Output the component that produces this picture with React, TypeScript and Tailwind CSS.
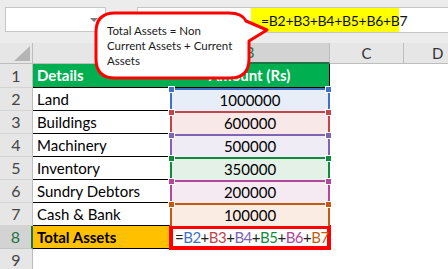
import React from "react";

type Item = {
  label: string;
  amount: string;
  line: string;
  fill: string;
};

const items: Item[] = [
  {label: "Land", amount: "1000000", line: "#3f72c6", fill: "#e8eef8"},
  {label: "Buildings", amount: "600000", line: "#c2454a", fill: "#f8e8e8"},
  {label: "Machinery", amount: "500000", line: "#8064b4", fill: "#efecf6"},
  {label: "Inventory", amount: "350000", line: "#128a3e", fill: "#e4f1e6"},
  {label: "Sundry Debtors", amount: "200000", line: "#b2489a", fill: "#f6eaf2"},
  {label: "Cash & Bank", amount: "100000", line: "#c25a12", fill: "#faece2"},
];

const formula: [string, string][] = [
  ["=", "#222"],
  ["B2", "#3f72c6"],
  ["+", "#222"],
  ["B3", "#c2454a"],
  ["+", "#222"],
  ["B4", "#8064b4"],
  ["+", "#222"],
  ["B5", "#128a3e"],
  ["+", "#222"],
  ["B6", "#b2489a"],
  ["+", "#222"],
  ["B7", "#c25a12"],
];

const RowHead = ({n, active}: {n: number; active?: boolean}) => (
  <div
    className={`flex items-center justify-center border-b text-[16px] text-[#444] ${
      active
        ? "bg-[#d3d3d3] border-b-[#c4c4c4] border-r-2 border-r-[#217346] text-[#217346]"
        : "bg-[#e6e6e6] border-b-[#d4d4d4] border-r border-r-[#bdbdbd]"
    }`}
  >
    {n}
  </div>
);

const Handle = ({color, side}: {color: string; side: "left" | "right"}) => (
  <span
    className={`absolute -top-[4px] h-[7px] w-[7px] border border-white ${
      side === "left" ? "-left-[4px]" : "-right-[4px]"
    }`}
    style={{backgroundColor: color}}
  />
);

export default function App() {
  return (
    <div className="relative h-[269px] w-[448px] overflow-hidden bg-white font-['Lato',sans-serif] text-black">
      {/* name box + formula bar */}
      <div className="flex h-[43px] items-start bg-[#ececec] pl-[5px] pt-[7px]">
        <div className="relative h-[25px] w-[101px] border border-[#c6c6c6] bg-white">
          <span className="absolute right-[7px] top-[10px] h-0 w-0 border-x-[4px] border-t-[4px] border-x-transparent border-t-[#7a7a7a]" />
        </div>
        <div className="ml-[31px] flex h-[26px] flex-1 border border-r-0 border-[#c6c6c6] bg-white">
          <div className="ml-[113px] flex h-[24px] w-[148px] items-center bg-[#ffff00] pl-[10px] text-[14px] tracking-[-0.3px] text-[#111]">
            =B2+B3+B4+B5+B6+B7
          </div>
        </div>
      </div>

      {/* sheet */}
      <div className="grid grid-cols-[33px_137px_160px_74px_1fr] grid-rows-[21px_24px_repeat(8,23px)]">
        {/* column headers */}
        <div className="relative border-b border-r border-[#bdbdbd] bg-[#e6e6e6]">
          <span className="absolute bottom-[2px] right-[2px] h-0 w-0 border-b-[15px] border-l-[16px] border-b-[#b5b5b5] border-l-transparent" />
        </div>
        <div className="flex items-center justify-center border-b border-r border-[#bdbdbd] bg-[#e6e6e6] text-[15px] text-[#333]">
          A
        </div>
        <div className="flex items-center justify-center border-b-2 border-r border-b-[#217346] border-r-[#bdbdbd] bg-[#d3d3d3] text-[15px] text-[#217346]">
          B
        </div>
        <div className="flex items-center justify-center border-b border-r border-[#bdbdbd] bg-[#e6e6e6] text-[15px] text-[#333]">
          C
        </div>
        <div className="flex items-center justify-start border-b border-[#bdbdbd] bg-[#e6e6e6] pl-[28px] text-[15px] text-[#333]">
          D
        </div>

        {/* row 1 */}
        <RowHead n={1} />
        <div className="flex items-center border-b border-black bg-[#00b050] pl-[4px] text-[15px] font-bold text-white">
          Details
        </div>
        <div className="flex items-center justify-center border-b border-r border-black bg-[#00b050] text-[15px] font-bold text-white">
          Amount (Rs)
        </div>
        <div />
        <div />

        {/* rows 2-7 */}
        {items.map((item, i) => (
          <React.Fragment key={item.label}>
            <RowHead n={i + 2} />
            <div className="flex items-center border-b border-black pl-[4px] text-[15px]">{item.label}</div>
            <div
              className="relative flex items-center justify-center border-x-2 border-t-2 text-[15px]"
              style={{borderColor: item.line, backgroundColor: item.fill}}
            >
              <Handle color={item.line} side="left" />
              <Handle color={item.line} side="right" />
              {item.amount}
            </div>
            <div />
            <div />
          </React.Fragment>
        ))}

        {/* row 8 */}
        <RowHead n={8} active />
        <div className="flex items-center border-b border-black bg-[#ffc000] pl-[4px] text-[15px] font-bold">
          Total Assets
        </div>
        <div className="-mx-px -my-px flex items-center border-[4px] border-[#ff0000] bg-white pl-[2px] text-[15px] tracking-[-0.5px]">
          {formula.map(([t, c], i) => (
            <span key={i} style={{color: c}}>
              {t}
            </span>
          ))}
        </div>
        <div />
        <div />

        {/* row 9 */}
        <RowHead n={9} />
        <div />
        <div />
        <div />
        <div />
      </div>

      {/* callout */}
      <svg className="absolute left-0 top-0" width="448" height="269" viewBox="0 0 448 269">
        <path
          d="M115 13 H229 Q242 13 246 21 L267 30 L249 41 V59 Q249 78 230 78 H115 Q96 78 96 59 V32 Q96 13 115 13 Z"
          fill="#ffffff"
          stroke="#ff0000"
          strokeWidth="3"
          strokeLinejoin="round"
        />
      </svg>
      <div className="absolute left-[107px] top-[23px] text-[11.5px] leading-[15px] text-[#1a1a1a]">
        Total Assets = Non
        <br />
        Current Assets + Current
        <br />
        Assets
      </div>
    </div>
  );
}
